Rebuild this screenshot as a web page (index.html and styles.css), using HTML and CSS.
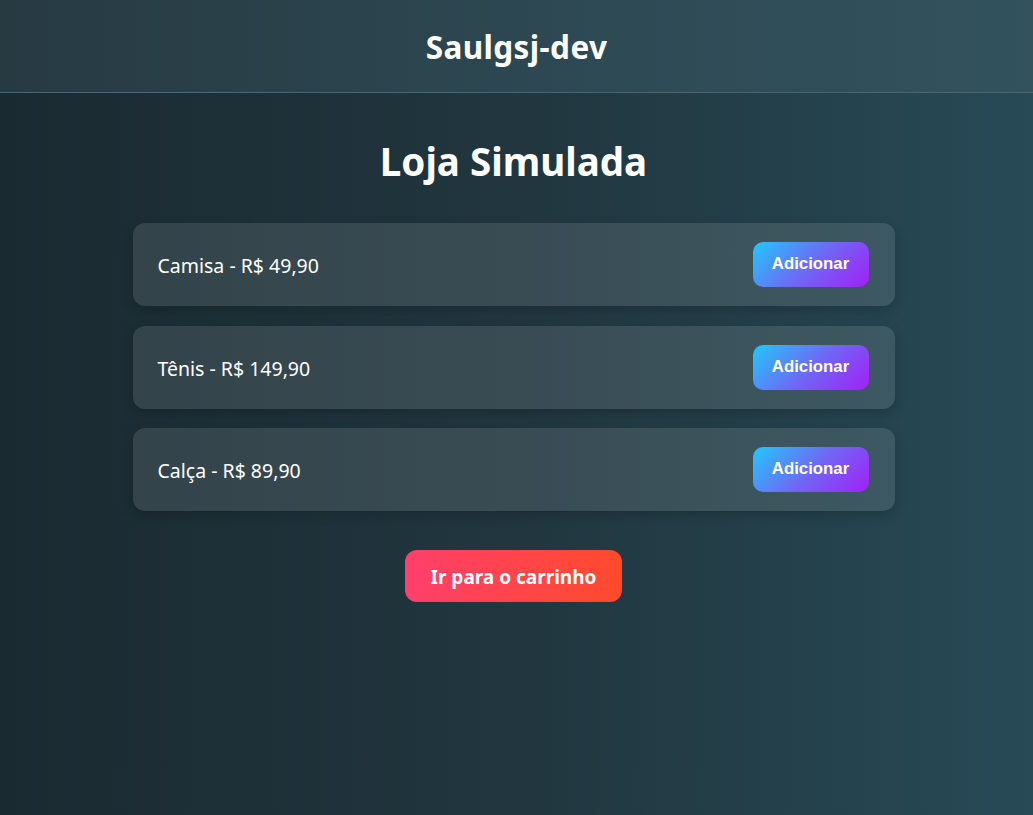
FILE: index.html
```html
<!DOCTYPE html>
<html lang="pt-BR">
<head>
<meta charset="utf-8">
<title>Loja Simulada</title>
<link rel="stylesheet" href="styles.css">
</head>
<body>
<header class="topbar">
  <h1 class="brand">Saulgsj-dev</h1>
</header>
<main class="store">
  <h2 class="store-title">Loja Simulada</h2>
  <ul class="product-list">
    <li class="product">
      <span class="product-name">Camisa - R$ 49,90</span>
      <button class="add-btn">Adicionar</button>
    </li>
    <li class="product">
      <span class="product-name">Tênis - R$ 149,90</span>
      <button class="add-btn">Adicionar</button>
    </li>
    <li class="product">
      <span class="product-name">Calça - R$ 89,90</span>
      <button class="add-btn">Adicionar</button>
    </li>
  </ul>
  <div class="cart-row">
    <button class="cart-btn">Ir para o carrinho</button>
  </div>
</main>
</body>
</html>
```

FILE: styles.css
```css
* { box-sizing: border-box; }

html, body { height: 100%; }

body {
  margin: 0;
  font-family: "Segoe UI", "Noto Sans", sans-serif;
  color: #fff;
  background: linear-gradient(to right, #1a2a31 0%, #21363f 50%, #274a56 100%);
  min-height: 100vh;
}

.topbar {
  height: 93px;
  display: flex;
  align-items: center;
  justify-content: center;
  background: linear-gradient(to right, #273a42, #2e4a55 60%, #32525e);
  border-bottom: 1px solid #4a6670;
}

.brand {
  margin: 0;
  font-size: 31.5px;
  font-weight: 700;
  letter-spacing: 0.4px;
}

.store {
  width: 762px;
  margin: 0 auto;
  padding-top: 40px;
  transform: translateX(-3px);
}

.store-title {
  margin: 0 0 34px;
  text-align: center;
  font-size: 38.5px;
  font-weight: 700;
  line-height: 56px;
}

.product-list {
  list-style: none;
  margin: 0;
  padding: 0;
  display: flex;
  flex-direction: column;
  gap: 19.5px;
}

.product {
  height: 83px;
  display: flex;
  align-items: center;
  justify-content: space-between;
  padding: 0 26px 0 25px;
  background: rgba(255, 255, 255, 0.11);
  border-radius: 12px;
  box-shadow: 0 4px 12px rgba(0, 0, 0, 0.18);
}

.product-name {
  font-size: 19.5px;
  padding-top: 2px;
}

.add-btn {
  width: 116px;
  height: 45px;
  border: none;
  border-radius: 10px;
  background: linear-gradient(135deg, #22c8fb 0%, #6d6af5 50%, #a21ff6 100%);
  color: #fff;
  font-family: "Liberation Sans", Arial, sans-serif;
  font-weight: 700;
  font-size: 16.8px;
  padding: 0 0 1px;
  cursor: pointer;
}

.cart-row {
  display: flex;
  justify-content: center;
  margin-top: 39px;
}

.cart-btn {
  width: 217px;
  height: 52px;
  border: none;
  border-radius: 12px;
  background: linear-gradient(to right, #ff3f6c, #ff4a2c);
  color: #fff;
  font-family: "Segoe UI", "Noto Sans", sans-serif;
  font-weight: 700;
  font-size: 19px;
  padding: 2px 0 0;
  cursor: pointer;
}
```
